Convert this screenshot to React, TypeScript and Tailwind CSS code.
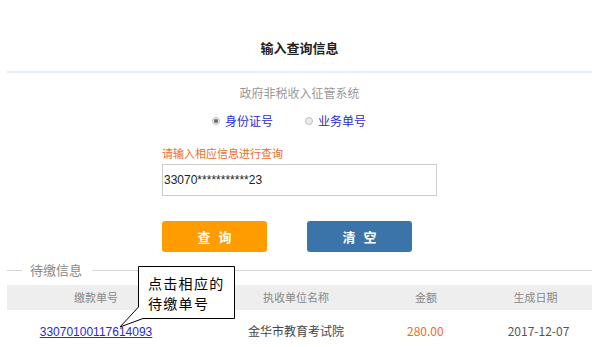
import React from 'react';

const rows = [
  { no: '33070100117614093', unit: '金华市教育考试院', amount: '280.00', date: '2017-12-07' },
];

function Radio({ checked, label }: { checked?: boolean; label: string }) {
  return (
    <label className="flex items-center gap-[5px] text-[12px] leading-[16px] text-[#2a2ad0]">
      <span className="w-[8px] h-[8px] rounded-full border border-[#bdbdbd] bg-[#ececec] flex items-center justify-center">
        {checked && <span className="w-[4px] h-[4px] rounded-full bg-[#666]" />}
      </span>
      {label}
    </label>
  );
}

export default function App() {
  return (
    <div className="relative w-[599px] h-[347px] overflow-hidden bg-white font-['Noto_Sans_CJK_SC','Liberation_Sans',sans-serif]">
      <div className="pt-[38px] text-center text-[13px] leading-[20px] font-bold text-[#222]">输入查询信息</div>
      <div className="mt-[13px] mx-[7px] h-[2px] bg-[#e0f0f6]" />

      <div className="mt-[12px] text-center text-[12px] leading-[16px] text-[#999]">政府非税收入征管系统</div>

      <div className="mt-[12px] flex pl-[212px] gap-[32px]">
        <Radio checked label="身份证号" />
        <Radio label="业务单号" />
      </div>

      <div className="w-[275px] mx-auto">
        <div className="mt-[17px] text-[11px] leading-[14px] text-[#f26a25]">请输入相应信息进行查询</div>
        <div className="mt-[4px] h-[32px] border border-[#cccccc] flex items-center pl-[1px] text-[12px] text-[#222] font-['Liberation_Sans',sans-serif]">
          33070***********23
        </div>
        <div className="mt-[25px] flex gap-[40px]">
          <button className="w-[105px] h-[31px] rounded-[3px] bg-[#ff9d00] text-white text-[13px] font-bold tracking-[8px] pl-[8px]">查询</button>
          <button className="w-[105px] h-[31px] rounded-[3px] bg-[#3a74a8] text-white text-[13px] font-bold tracking-[8px] pl-[8px]">清空</button>
        </div>
      </div>

      <div className="mt-[10px] flex items-center px-[7px] h-[16px]">
        <div className="w-[15px] h-px bg-[#d6d6d6]" />
        <div className="ml-[8px] mr-[10px] text-[13px] leading-[16px] text-[#888]">待缴信息</div>
        <div className="flex-1 h-px bg-[#d6d6d6]" />
      </div>

      <div className="mt-[7px] mx-[7px] h-[25px] bg-[#eeeeee] grid grid-cols-[178px_222px_38px_1fr] items-center text-[11px] text-[#888]">
        <div className="text-center">缴款单号</div>
        <div className="text-center">执收单位名称</div>
        <div className="text-center">金额</div>
        <div className="text-center pl-[34px]">生成日期</div>
      </div>

      {rows.map(r => (
        <div key={r.no} className="mt-[9px] mx-[7px] h-[24px] grid grid-cols-[178px_222px_38px_1fr] items-center text-[12px] text-[#444]">
          <div className="text-center">
            <a href="#" className="underline text-[#2a2ad0] font-['Liberation_Sans',sans-serif]">{r.no}</a>
          </div>
          <div className="text-center">{r.unit}</div>
          <div className="text-center text-[#f26a25] whitespace-nowrap pr-[8px]">{r.amount}</div>
          <div className="text-center pl-[40px] text-[#555]">{r.date}</div>
        </div>
      ))}

      {/* callout */}
      <div className="absolute left-[118px] top-[265px] w-[120px] h-[64px]">
        <svg width="120" height="64" className="absolute inset-0">
          <path d="M20.5 1.5 H116.5 V53.5 H25 L2 62 L20.5 42 Z" fill="#fff" stroke="#000" strokeWidth="1" />
        </svg>
        <div className="absolute left-[30px] top-[8px] text-[14px] leading-[20px] tracking-[1.3px] text-black">
          <div>点击相应的</div>
          <div>待缴单号</div>
        </div>
      </div>
    </div>
  );
}
